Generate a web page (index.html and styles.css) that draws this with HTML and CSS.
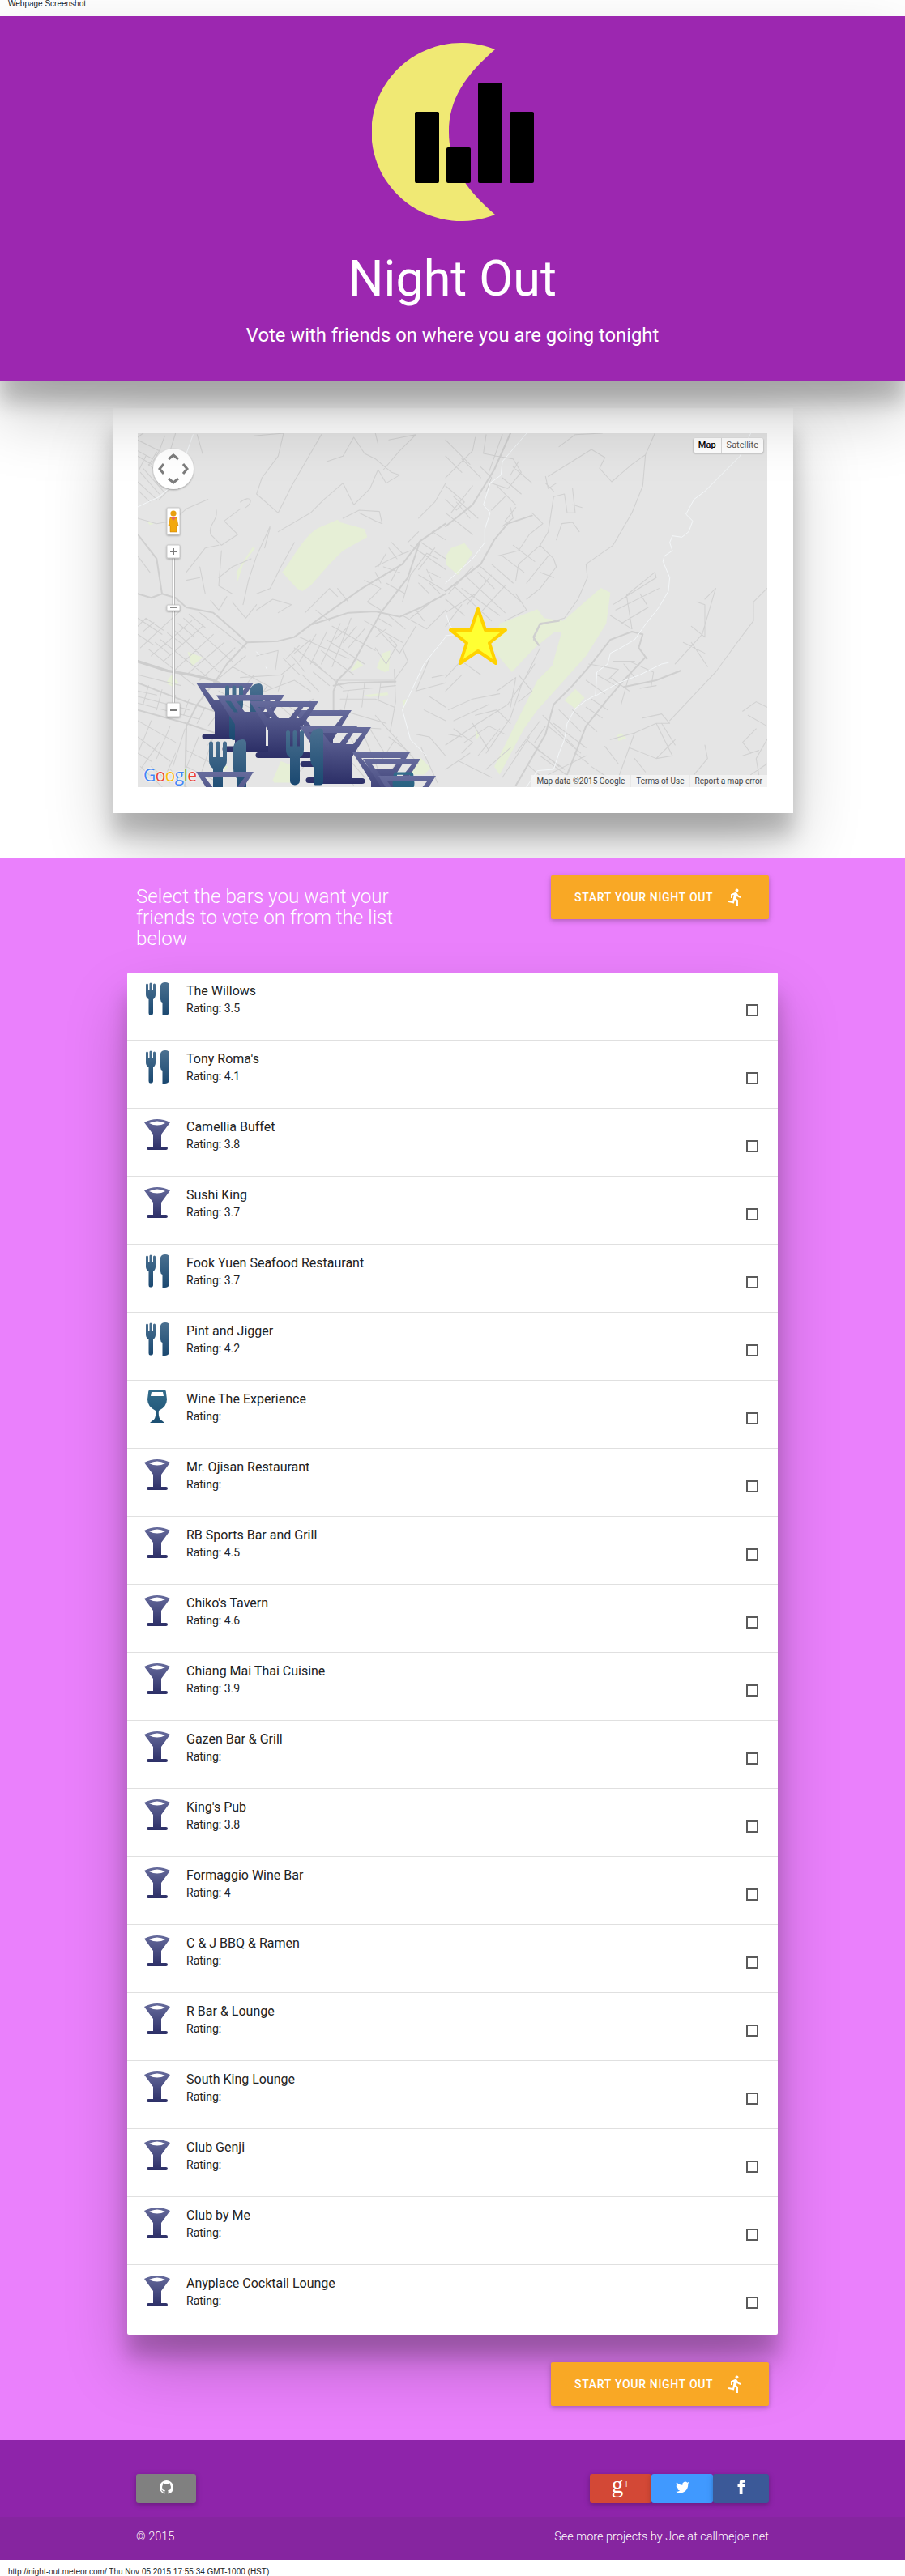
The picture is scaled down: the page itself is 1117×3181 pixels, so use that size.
FILE: index.html
```html
<!DOCTYPE html>
<html lang="en">
<head>
<meta charset="utf-8">
<title>Night Out</title>
<link rel="stylesheet" href="styles.css">
</head>
<body>
<div class="caption caption-top">Webpage Screenshot</div>
<header class="hero">
  <svg class="logo" width="202" height="220" viewBox="0 0 202 220">
    <path class="moon" d="M152 8A111 110 0 1 0 152 212C115 180 95 150 95 110C95 70 115 40 152 8Z"/>
    <rect x="53" y="85" width="30" height="88" rx="2"/>
    <rect x="92" y="129" width="30" height="44" rx="2"/>
    <rect x="131" y="49" width="30" height="124" rx="2"/>
    <rect x="170" y="85" width="30" height="88" rx="2"/>
  </svg>
  <h1 class="hero-title">Night Out</h1>
  <p class="hero-sub">Vote with friends on where you are going tonight</p>
</header>

<section class="map-band">
  <div class="map-card">
    <div class="map">
      <svg class="map-svg" width="777" height="437" viewBox="0 0 777 437">
        <defs>
          <linearGradient id="g-martini" x1="0" y1="0" x2="0" y2="1">
            <stop offset="0" stop-color="#666b9c"/>
            <stop offset="1" stop-color="#2c2f67"/>
          </linearGradient>
          <linearGradient id="g-fork" x1="0" y1="0" x2="0" y2="1">
            <stop offset="0" stop-color="#4a7090"/>
            <stop offset="1" stop-color="#1a4870"/>
          </linearGradient>
          <linearGradient id="g-wine" x1="0" y1="0" x2="0" y2="1">
            <stop offset="0" stop-color="#336d8c"/>
            <stop offset="1" stop-color="#1c4f72"/>
          </linearGradient>
          <filter id="ctl-soft" x="-30%" y="-30%" width="160%" height="160%">
            <feDropShadow dx="0" dy="1" stdDeviation="1" flood-color="#000" flood-opacity=".35"/>
          </filter>
          <symbol id="m-martini" viewBox="0 0 71 70">
            <path fill="url(#g-martini)" fill-rule="evenodd" d="M0 0H71L48 36V63H60a3.5 3.5 0 0 1 0 7H11a3.5 3.5 0 0 1 0-7H23V36ZM11 7L22 21H49L60 7Z"/>
          </symbol>
          <symbol id="m-fork" viewBox="0 0 46 70">
            <path fill="url(#g-fork)" d="M0 5a2.5 2.5 0 0 1 5 0V22H8.500V5a2.500 2.500 0 0 1 5 0V22H17V5a2.500 2.500 0 0 1 5 0V26Q22 33 17 36V65a6 5 0 0 1-12 0V36Q0 33 0 26ZM30 10Q31 1 41 0Q46 0 46 5V66a4 4 0 0 1-4 4H36a2 2 0 0 1-2-2V48Q30 44 30 36Z"/>
          </symbol>
          <symbol id="i-martini" viewBox="0 0 32 44">
            <path fill="url(#g-martini)" fill-rule="evenodd" d="M0 7Q16-1 32 7L21 22V37H27a2 2 0 0 1 0 4H5a2 2 0 0 1 0-4H11V22ZM6 8Q16 13 26 8Q16 3 6 8Z"/>
          </symbol>
          <symbol id="i-fork" viewBox="0 0 32 44">
            <path fill="url(#g-fork)" d="M2 5a1.400 1.400 0 0 1 3 0V12H6.500V4a1.400 1.400 0 0 1 3 0V12H11V5a1.400 1.400 0 0 1 3 0V17Q14 21 11 23V40Q11 43 7 42.500Q5.500 42 5.500 40V23Q2 21 2 17ZM20 6Q21 2 26 2Q31 2 31 6V39Q31 42 26 43H22.500V27Q20 26 20 23Z"/>
          </symbol>
          <symbol id="i-wine" viewBox="0 0 32 44">
            <path fill="url(#g-wine)" fill-rule="evenodd" d="M8 1H24Q27 1 27 5L28 13Q28 22 18 27Q17 34 20 38Q23 40 25 42H7Q9 40 12 38Q15 34 14 27Q4 22 4 13L5 5Q5 1 8 1ZM9 4L8 9H24L23 4Z"/>
          </symbol>
        </defs>
        <rect class="map-bg" width="777" height="437"/>
        <g transform="translate(-40 -35) scale(.3333)">
          <g class="park">
            <path d="M655 620C700 560 740 480 790 455L860 425L870 435L960 460L970 490L880 540L830 590L760 670L730 690L710 680Z"/>
            <path d="M545 528L555 530L510 590L490 655L485 620Z"/>
            <path d="M155 433L180 440L165 445Z"/>
            <path d="M305 915L360 935L320 970Z"/>
            <path d="M225 1030L245 1000L272 1030L250 1045Z"/>
            <path d="M905 990L935 945L955 965Z"/>
            <path d="M1005 975L1025 920L1055 910L1050 985L1035 990Z"/>
            <path d="M960 1075L1045 1065L1048 1075L975 1082Z"/>
            <path d="M1100 1095L1115 1090L1105 1125Z"/>
            <path d="M1165 1305L1205 1345L1180 1370L1130 1370Z"/>
            <path d="M620 1390L650 1320L690 1335L685 1400L625 1400Z"/>
            <path d="M440 1335L455 1340L440 1360Z"/>
          </g>
          <path class="road-thin" d="M120 130L200 170L170 220L120 190M120 170L175 200M200 170L220 115M140 105L120 120M260 105L240 170L300 210M340 110L360 180M300 210L260 290L200 350M130 250L200 330M140 235L215 320M160 220L240 290M120 285L190 350M125 320L165 360M150 190L125 240M190 175L160 225M215 190L185 240M380 350L300 385L250 430L190 440L120 420M410 385C420 430 380 440 390 480L430 520L490 480L440 430L500 385M500 360C540 330 550 360 520 380M610 450L560 560L530 650L510 740M610 455L590 530M700 510L650 600L610 680L560 700M300 620L370 530L420 520M420 640L470 600L540 570M350 600L370 700M430 540L420 670L470 700M660 105L640 190L580 270L560 330L640 400L690 300L800 110M880 290L810 350L760 400L640 470M820 210L880 190L920 120L960 180L1000 200L1060 250L1090 260L1040 290L1010 240L980 310L920 370L880 290M1000 105L1010 145M1050 130L1150 110L1090 170L1030 240M880 420L940 390L1015 395L1025 440L1000 430L940 400M1260 290L1220 360L1160 420M550 115L660 105M120 560L165 620M300 650L350 640M390 725L420 760L450 710M470 730L520 790L560 740M560 760L620 720L690 740L640 770M740 770L830 680L860 710M860 680L900 730M780 760L830 800M1000 600L1080 560L1130 540M960 650L1020 680L970 730L1020 760M1130 520L1260 610M1170 510L1260 570M1220 530L1160 610M1190 550L1130 630M1160 630L1260 690M1130 630L1100 730M1040 660L1110 700M1100 780L1190 830L1260 760M1150 760L1180 800M1130 790L1220 720"/>
          <path class="road-thin" d="M120 790L210 850M120 850L180 890M130 900L280 760M170 930L320 800M215 950L360 820M260 980L400 850M300 1000L440 880M350 1020L480 900M400 1030L520 930M290 790L470 950M250 830L420 990M205 870L380 1010M160 905L330 1040M350 770L520 900M120 1060L190 1075M120 1170L260 1250M120 1230L240 1320M120 1290L170 1320M170 1170L125 1280M240 1190L190 1310M295 1200L250 1340M345 1230L290 1370M400 1230L350 1380M300 1280L420 1340M300 1340L400 1390M430 1180L380 1260M470 970L620 1050M500 1010L660 1000L640 1060M560 930L640 910L630 980M660 940L720 1000M540 1080L700 1020L760 1060M700 900L850 1020M720 860L900 940M780 850L720 950M820 840L760 960M870 810L800 960M910 790L840 970M840 820L1000 910M820 870L960 960M800 910L920 1000M770 950L880 1050M960 800L1100 880M1000 820L1090 920L1150 820M1050 860L1080 890L1040 960L1000 900M1100 900L1120 950L1070 1020M850 1020L1075 1020M880 1060L1075 1040M870 1090L1000 1090L1070 1120M900 1060L880 1150M960 1030L950 1120M1020 1030L1010 1100M1070 980L1075 1100L1055 1210M870 1130L1040 1180M860 1190L1020 1200M1150 1060L1200 940M1260 1030L1150 1060M1150 1220L1200 1230L1260 1300M1050 1230L1130 1290M1170 1270L1230 1400M1060 1350L1110 1290M890 1200L940 1290M980 1200L1040 1300M1000 1150L1160 1330M650 1100L700 1130L770 1090M700 1380L780 1290M800 1360L880 1240"/>
          <path class="road-thin" d="M120 820L150 790L215 835M140 840L180 805M185 880L240 925M230 845L290 890M270 810L330 860M310 775L370 825M120 1000L280 1040M120 1080L310 1130M120 1105L350 1165M160 1040L140 1110M210 1055L190 1130M260 1075L240 1140M310 1090L290 1150M370 1120L340 1180M420 1060L550 1130L520 1220M450 1100L380 1190M500 1120L420 1230M550 1000L480 1090M600 1040L560 1100M630 1100L720 1180M240 1350L300 1415M170 1340L240 1400M130 1340L210 1415M200 1250L130 1350M260 1290L220 1380M1110 830L1050 780M1060 820L1010 790M1000 860L1040 830M960 830L900 900M930 820L880 880M900 820L850 870M720 890L670 940M760 870L700 920M690 930L740 990M650 1000L700 960M770 990L830 1040M730 1000L790 1060M1240 700L1200 660M1200 700L1160 660M1240 640L1200 620M1090 620L1030 600M1060 650L1090 590M1020 640L1050 620M1000 620L1020 660M1190 610L1210 650M1230 570L1190 550M1260 500L1210 470M1160 470L1120 510M1080 570L1050 530M1100 550L1060 510M1040 550L1010 600M960 1230L1010 1350M900 1310L960 1380M850 1300L920 1410M1080 1230L1020 1320M1200 1080L1260 1120M1180 1130L1260 1170M1210 1010L1260 1000"/>
          <path class="road-wide" d="M120 700L170 715L210 700L260 715L300 750L400 770L470 830L525 880L640 875L700 860L760 815L900 770L1000 765L1090 785L1170 750L1260 700M760 815L950 680L1100 590L1165 505L1260 440M1165 505L1120 640L1020 770L960 880L910 970L860 1020L845 1060L845 1140M120 480L190 570L210 700M525 880L450 960L410 1020L340 1110L300 1190L295 1415M120 1130L300 1180L420 1220M120 1030L300 1100L420 1140M845 1040L900 1030L1075 1025"/>
          <path class="road-high" d="M120 950L230 985L320 1000L400 1020L460 1050"/>
          <path class="river" d="M325 110L300 180L280 270L200 340L120 378M1260 860L1180 960L1100 1130L1130 1240L1190 1300M560 915L572 928M595 972L598 978"/>
        </g>
        <g transform="translate(380 -35) scale(.3333)">
          <g class="park">
            <path d="M20 530L70 512L100 550L45 630L0 590V560Z"/>
            <path d="M200 810L340 757L365 790L435 800L575 678L610 695L595 810L520 930L390 1075L340 1130L290 1200L200 1370L180 1340L270 1160L340 1020L395 965L430 840L405 840L330 900L245 990L170 900Z"/>
            <path d="M440 1095L480 1052L515 1085L480 1125Z"/>
            <path d="M110 1200L125 1225L115 1240Z"/>
            <path d="M635 1225L650 1215L670 1235L640 1245Z"/>
          </g>
          <path class="road-thin" d="M420 155L480 110L580 105M380 265L540 165L590 195L570 235L615 285L690 220L740 185L775 105M740 185L730 300L690 400L620 520L520 590L525 640L490 720L440 790L350 815L325 870L345 890M370 265L380 310L410 290M370 290L400 320M400 340L440 330L450 400L480 400L470 310M400 340L380 470L350 520L270 590L260 650M470 370L505 380M430 440L470 435L495 470M430 440L410 500M240 380L250 420L210 450M150 110L140 180L190 190L250 200L280 250L230 310L170 290M110 120L100 170L0 270M210 110L160 250M320 400L360 440L310 480L270 540L190 560M350 520L400 570L410 600L350 680L300 720M130 600L280 730M80 640L220 770M30 670L170 800M100 600L10 700M170 630L80 740M220 670L120 780M0 770L110 700M30 340L120 420M0 400L100 480M40 360L90 420M100 300L20 400M610 780L690 830M620 740L780 640L775 620L670 705L690 830M630 760L790 680M650 810L750 750M720 700L745 740M720 770L700 780M850 960L950 850L1000 680M910 820L960 860L960 740L930 730M880 880L960 920M910 880L970 970M830 1170L1000 990L1080 880L1140 800L1140 730L1190 680M730 1160L800 1145L830 1180L780 1180L700 1215L610 1240M700 1215L640 1380M590 1265L640 1330M680 1270L780 1310L840 1300L780 1180M850 1240L780 1310M740 1360L700 1310M960 1260L970 1310L920 1370M1100 1135L1150 1100L1190 1120M1120 1150L1190 1190M1150 1200L1100 1250L1130 1290M1190 1240L1150 1310L1160 1370M1130 1370L1190 1330M650 1110L680 1000M680 950L770 990L760 1050M720 1050L780 1040M400 1180L520 1270M330 1270L440 1350M360 1150L480 1270M300 1240L420 1340M0 1260L120 1180L230 1110L330 960M30 1200L100 1250L60 1290M100 1180L160 1280M150 1290L240 1160L280 1040L350 900M190 1060L260 1010L240 1120M270 1000L320 1060L270 1100M110 1150L190 1130L240 1180M50 1320L170 1380M0 1350L90 1290M10 1220L60 1230M520 1120L580 1160M540 1090L600 1130M560 1000L630 1040M530 960L640 980L600 1020M620 950L700 950"/>
          <path class="road-thin" d="M0 130L90 220M0 190L60 250M0 300L70 360L40 390L0 350M60 200L130 270M130 230L170 270L150 320M190 300L260 370M210 270L280 330M250 230L320 290M270 210L240 260M220 340L170 390M260 380L220 430M60 680L200 780M120 620L180 680M170 590L250 660M210 560L290 620M250 520L330 580M0 720L70 780M60 740L0 820M300 660L380 560M260 700L300 760L220 800M350 620L400 640M1000 680L960 720M10 1130L100 1090L200 1070M30 1170L160 1110M70 1250L160 1190L220 1220M150 1350L240 1270M210 1380L310 1230M260 1290L350 1170M330 1250L370 1190M200 1200L120 1300M380 1190L500 1290M350 1300L460 1380M380 1370L520 1300M300 1330L380 1400M420 1130L500 1210M470 1130L560 1210M480 1290L530 1330M520 1020L590 1070M610 1010L680 1060M660 960L700 1010M0 1010L120 880M0 1060L60 1000M60 950L130 1000M100 880L170 950M540 1340L600 1380M800 1180L850 1260M1100 1300L1160 1280"/>
          <path class="road-wide" d="M240 105L180 240L100 370L0 450M320 410L230 440L180 500L130 590L0 690M730 850L690 840L610 870L540 960L470 1040L400 1110L370 1220L260 1410M740 935L660 1020L600 1090L520 1190L450 1370M730 850L715 900L745 940M660 1045L780 1020L870 985M420 800L350 810L325 860L345 890"/>
          <path class="river" d="M1130 105L1090 190L1010 270L960 320L920 350L890 405L915 430L900 470L875 490L840 485L830 510L840 540L810 560L805 580L830 640L825 690L790 750L735 820L700 870L640 905L610 920L600 960L560 990L555 1075L520 1095L480 1125L450 1180L440 1240L420 1290L400 1350L340 1355L300 1415M300 105L210 210L205 260L165 290L140 370L165 400L145 460L145 510L100 570L0 660M560 1075L640 1030L720 1000L800 960L825 955M0 770L15 815L40 850L0 855"/>
        </g>
        <g class="markers">
          <use href="#m-martini" x="72" y="308" width="71" height="70"/>
          <use href="#m-fork" x="108" y="309" width="46" height="70"/>
          <use href="#m-martini" x="97" y="322" width="71" height="73"/>
          <use href="#m-martini" x="110" y="323" width="71" height="70"/>
          <use href="#m-martini" x="193" y="342" width="71" height="70"/>
          <use href="#m-martini" x="138" y="328" width="71" height="76"/>
          <use href="#m-martini" x="152" y="328" width="71" height="76"/>
          <use href="#m-martini" x="200" y="362" width="71" height="70"/>
          <use href="#m-martini" x="217" y="363" width="71" height="70"/>
          <use href="#m-fork" x="183" y="364" width="46" height="71"/>
          <use href="#m-fork" x="88" y="378" width="46" height="70"/>
          <use href="#m-martini" x="265" y="394" width="71" height="70"/>
          <use href="#m-martini" x="278" y="402" width="71" height="70"/>
          <use href="#i-wine" x="310" y="417" width="36" height="50"/>
          <use href="#m-martini" x="297" y="423" width="71" height="70"/>
          <use href="#m-martini" x="72" y="418" width="71" height="70"/>
        </g>
        <polygon class="star" points="420,-4 429,22 454,22 434,38 442,63 420,48 398,63 406,38 386,22 411,22" transform="translate(0 221)"/>
        <g class="nav">
          <circle class="ctl ctl-lift" cx="44" cy="44" r="25"/>
          <path class="chev" d="M38 32L44 27L50 32M38 56L44 61L50 56M32 38L27 44L32 50M56 38L61 44L56 50"/>
          <rect class="ctl-box" x="36" y="92" width="16" height="33" rx="1"/>
          <circle cx="44" cy="99" r="3.600" fill="#e8a010"/>
          <path d="M40 104H48L50 114H48V122H40V114H38Z" fill="#f2a80d" stroke="#c27a05" stroke-width=".5"/>
          <path d="M41 104H47L44 108Z" fill="#e8646a"/>
          <rect class="track" x="43" y="154" width="2.500" height="180"/>
          <rect class="ctl-box" x="36" y="138" width="16" height="16" rx="1"/>
          <path class="sign" d="M40 146H48M44 142V150"/>
          <rect class="ctl-box" x="36" y="212" width="16" height="7" rx="1"/>
          <path d="M40 215.500H48" stroke="#8a8a8a"/>
          <rect class="ctl-box" x="36" y="333" width="16" height="17" rx="1"/>
          <path class="sign" d="M40 342H48"/>
        </g>
      </svg>
      <div class="map-type">
        <span class="map-type-btn map-type-on">Map</span>
        <span class="map-type-btn">Satellite</span>
      </div>
      <div class="google"><span class="gb">G</span><span class="gr">o</span><span class="gy">o</span><span class="gb">g</span><span class="gg">l</span><span class="gr">e</span></div>
      <div class="attrib">
        <span class="attrib-item">Map data ©2015 Google</span>
        <span class="attrib-item">Terms of Use</span>
        <span class="attrib-item">Report a map error</span>
      </div>
    </div>
  </div>
</section>

<main class="pick">
  <div class="pick-head">
    <h2 class="pick-title">Select the bars you want your friends to vote on from the list below</h2>
    <a class="start-btn"><span class="start-label">START YOUR NIGHT OUT</span>
      <svg class="run" width="24" height="24" viewBox="0 0 24 24"><path d="M13.49 5.48c1.1 0 2-.9 2-2s-.9-2-2-2-2 .9-2 2 .9 2 2 2zm-3.6 13.9l1-4.4 2.1 2v6h2v-7.5l-2.1-2 .6-3c1.3 1.5 3.3 2.5 5.5 2.5v-2c-1.9 0-3.5-1-4.3-2.4l-1-1.6c-.4-.6-1-1-1.7-1-.3 0-.5.1-.8.1l-5.2 2.2v4.7h2v-3.4l1.8-.7-1.6 8.1-4.9-1-.4 2 7 1.4z"/></svg>
    </a>
  </div>
  <ul class="bars">
    <li class="bar"><svg class="bar-icon"><use href="#i-fork"/></svg><div class="bar-text"><div class="bar-name">The Willows</div><div class="bar-rating">Rating: 3.5</div></div><span class="check"></span></li>
    <li class="bar"><svg class="bar-icon"><use href="#i-fork"/></svg><div class="bar-text"><div class="bar-name">Tony Roma's</div><div class="bar-rating">Rating: 4.1</div></div><span class="check"></span></li>
    <li class="bar"><svg class="bar-icon"><use href="#i-martini"/></svg><div class="bar-text"><div class="bar-name">Camellia Buffet</div><div class="bar-rating">Rating: 3.8</div></div><span class="check"></span></li>
    <li class="bar"><svg class="bar-icon"><use href="#i-martini"/></svg><div class="bar-text"><div class="bar-name">Sushi King</div><div class="bar-rating">Rating: 3.7</div></div><span class="check"></span></li>
    <li class="bar"><svg class="bar-icon"><use href="#i-fork"/></svg><div class="bar-text"><div class="bar-name">Fook Yuen Seafood Restaurant</div><div class="bar-rating">Rating: 3.7</div></div><span class="check"></span></li>
    <li class="bar"><svg class="bar-icon"><use href="#i-fork"/></svg><div class="bar-text"><div class="bar-name">Pint and Jigger</div><div class="bar-rating">Rating: 4.2</div></div><span class="check"></span></li>
    <li class="bar"><svg class="bar-icon"><use href="#i-wine"/></svg><div class="bar-text"><div class="bar-name">Wine The Experience</div><div class="bar-rating">Rating:</div></div><span class="check"></span></li>
    <li class="bar"><svg class="bar-icon"><use href="#i-martini"/></svg><div class="bar-text"><div class="bar-name">Mr. Ojisan Restaurant</div><div class="bar-rating">Rating:</div></div><span class="check"></span></li>
    <li class="bar"><svg class="bar-icon"><use href="#i-martini"/></svg><div class="bar-text"><div class="bar-name">RB Sports Bar and Grill</div><div class="bar-rating">Rating: 4.5</div></div><span class="check"></span></li>
    <li class="bar"><svg class="bar-icon"><use href="#i-martini"/></svg><div class="bar-text"><div class="bar-name">Chiko's Tavern</div><div class="bar-rating">Rating: 4.6</div></div><span class="check"></span></li>
    <li class="bar"><svg class="bar-icon"><use href="#i-martini"/></svg><div class="bar-text"><div class="bar-name">Chiang Mai Thai Cuisine</div><div class="bar-rating">Rating: 3.9</div></div><span class="check"></span></li>
    <li class="bar"><svg class="bar-icon"><use href="#i-martini"/></svg><div class="bar-text"><div class="bar-name">Gazen Bar &amp; Grill</div><div class="bar-rating">Rating:</div></div><span class="check"></span></li>
    <li class="bar"><svg class="bar-icon"><use href="#i-martini"/></svg><div class="bar-text"><div class="bar-name">King's Pub</div><div class="bar-rating">Rating: 3.8</div></div><span class="check"></span></li>
    <li class="bar"><svg class="bar-icon"><use href="#i-martini"/></svg><div class="bar-text"><div class="bar-name">Formaggio Wine Bar</div><div class="bar-rating">Rating: 4</div></div><span class="check"></span></li>
    <li class="bar"><svg class="bar-icon"><use href="#i-martini"/></svg><div class="bar-text"><div class="bar-name">C &amp; J BBQ &amp; Ramen</div><div class="bar-rating">Rating:</div></div><span class="check"></span></li>
    <li class="bar"><svg class="bar-icon"><use href="#i-martini"/></svg><div class="bar-text"><div class="bar-name">R Bar &amp; Lounge</div><div class="bar-rating">Rating:</div></div><span class="check"></span></li>
    <li class="bar"><svg class="bar-icon"><use href="#i-martini"/></svg><div class="bar-text"><div class="bar-name">South King Lounge</div><div class="bar-rating">Rating:</div></div><span class="check"></span></li>
    <li class="bar"><svg class="bar-icon"><use href="#i-martini"/></svg><div class="bar-text"><div class="bar-name">Club Genji</div><div class="bar-rating">Rating:</div></div><span class="check"></span></li>
    <li class="bar"><svg class="bar-icon"><use href="#i-martini"/></svg><div class="bar-text"><div class="bar-name">Club by Me</div><div class="bar-rating">Rating:</div></div><span class="check"></span></li>
    <li class="bar"><svg class="bar-icon"><use href="#i-martini"/></svg><div class="bar-text"><div class="bar-name">Anyplace Cocktail Lounge</div><div class="bar-rating">Rating:</div></div><span class="check"></span></li>
  </ul>
  <div class="pick-foot">
    <a class="start-btn"><span class="start-label">START YOUR NIGHT OUT</span>
      <svg class="run" width="24" height="24" viewBox="0 0 24 24"><path d="M13.49 5.48c1.1 0 2-.9 2-2s-.9-2-2-2-2 .9-2 2 .9 2 2 2zm-3.6 13.9l1-4.4 2.1 2v6h2v-7.5l-2.1-2 .6-3c1.3 1.5 3.3 2.5 5.5 2.5v-2c-1.9 0-3.5-1-4.3-2.4l-1-1.6c-.4-.6-1-1-1.7-1-.3 0-.5.1-.8.1l-5.2 2.2v4.7h2v-3.4l1.8-.7-1.6 8.1-4.9-1-.4 2 7 1.4z"/></svg>
    </a>
  </div>
</main>

<footer class="foot">
  <div class="foot-main">
    <a class="sq sq-git"><svg width="17" height="17" viewBox="0 0 16 16"><path d="M8 0C3.58 0 0 3.58 0 8c0 3.54 2.29 6.53 5.47 7.59.4.07.55-.17.55-.38 0-.19-.01-.82-.01-1.49-2.01.37-2.53-.49-2.69-.94-.09-.23-.48-.94-.82-1.13-.28-.15-.68-.52-.01-.53.63-.01 1.08.58 1.23.82.72 1.21 1.87.87 2.33.66.07-.52.28-.87.51-1.07-1.78-.2-3.64-.89-3.64-3.95 0-.87.31-1.59.82-2.15-.08-.2-.36-1.02.08-2.12 0 0 .67-.21 2.2.82.64-.18 1.32-.27 2-.27.68 0 1.36.09 2 .27 1.53-1.04 2.2-.82 2.2-.82.44 1.1.16 1.92.08 2.12.51.56.82 1.27.82 2.15 0 3.07-1.87 3.75-3.65 3.95.29.25.54.73.54 1.48 0 1.07-.01 1.93-.01 2.2 0 .21.15.46.55.38A8.013 8.013 0 0016 8c0-4.42-3.58-8-8-8z"/></svg></a>
    <div class="socials">
      <a class="sq sq-gplus"><span class="gplus-g">g</span><span class="gplus-p">+</span></a>
      <a class="sq sq-tw"><svg width="17" height="17" viewBox="0 0 24 24"><path d="M23.953 4.57a10 10 0 01-2.825.775 4.958 4.958 0 002.163-2.723c-.951.555-2.005.959-3.127 1.184a4.92 4.92 0 00-8.384 4.482C7.69 8.095 4.067 6.13 1.64 3.162a4.822 4.822 0 00-.666 2.475c0 1.71.87 3.213 2.188 4.096a4.904 4.904 0 01-2.228-.616v.06a4.923 4.923 0 003.946 4.827 4.996 4.996 0 01-2.212.085 4.936 4.936 0 004.604 3.417 9.867 9.867 0 01-6.102 2.105c-.39 0-.779-.023-1.17-.067a13.995 13.995 0 007.557 2.209c9.053 0 13.998-7.496 13.998-13.985 0-.21 0-.42-.015-.63A9.935 9.935 0 0024 4.59z"/></svg></a>
      <a class="sq sq-fb"><svg width="18" height="18" viewBox="0 0 24 24"><path d="M9 8H6v4h3v12h5V12h3.6l.4-4h-4V6.3c0-1 .2-1.3 1.1-1.3H18V0h-3.8C10.6 0 9 1.6 9 4.6z"/></svg></a>
    </div>
  </div>
  <div class="foot-copy">
    <span class="copy-left">© 2015</span>
    <span class="copy-right">See more projects by Joe at callmejoe.net</span>
  </div>
</footer>
<div class="caption caption-bottom">http://night-out.meteor.com/ Thu Nov 05 2015 17:55:34 GMT-1000 (HST)</div>
</body>
</html>
```
FILE: styles.css
```css
* { box-sizing: border-box; }
html, body { margin: 0; padding: 0; }
body { font-family: Roboto, "Liberation Sans", sans-serif; background: #fff; color: #000; width: 1117px; }
a { color: inherit; text-decoration: none; }

.caption { font-family: "Liberation Sans", Arial, sans-serif; height: 20px; padding-left: 10px; color: #222; }
.caption-top { font-size: 10px; line-height: 9px; }
.caption-bottom { font-size: 10px; line-height: 29px; overflow: hidden; }

.hero { position: relative; z-index: 2; height: 450px; background: #9c27b0; color: #fff; text-align: center; padding-top: 33px;
  box-shadow: 0 27px 24px 0 rgba(0,0,0,.2), 0 40px 77px 0 rgba(0,0,0,.22); }
.logo { display: block; margin-left: 459px; }
.moon { fill: #f0e974; }
.hero-title { margin: 36px 0 0; font-size: 61px; line-height: 70px; font-weight: 400; }
.hero-sub { margin: 20px 0 0; font-size: 23.8px; line-height: 30px; font-weight: 400; }

.map-band { height: 589px; padding: 34px 0 0 139px; background: #fff; }
.map-card { width: 840px; height: 500px; padding: 31px 32px 32px 31px; background: #fff;
  box-shadow: 0 27px 24px 0 rgba(0,0,0,.2), 0 40px 77px 0 rgba(0,0,0,.22); }
.map { position: relative; width: 777px; height: 437px; overflow: hidden; }
.map-svg { display: block; }
.map-bg { fill: #e5e5e5; }
.park { fill: #e6efd6; }
.road-thin, .road-wide, .road-high, .river { fill: none; stroke-linejoin: round; stroke-linecap: round; }
.road-thin { stroke: #d1d1d1; stroke-width: 3.2; }
.road-wide { stroke: #cfcfcf; stroke-width: 6; }
.road-high { stroke: #cdcdcd; stroke-width: 10; }
.river { stroke: #f3f6f8; stroke-width: 3; }
.star { fill: #ffff33; stroke: #ffd200; stroke-width: 4; stroke-linejoin: round; }
.ctl { fill: #fff; }
.ctl-lift { filter: url(#ctl-soft); }
.chev { fill: none; stroke: #7d7d7d; stroke-width: 3; }
.ctl-box { fill: #fff; stroke: #bdbdbd; stroke-width: .8; filter: url(#ctl-soft); }
.track { fill: #fff; stroke: #9e9e9e; stroke-width: .7; }
.sign { fill: none; stroke: #7a7a7a; stroke-width: 2; }

.map-type { position: absolute; top: 6px; right: 5px; display: flex; background: #fff; border-radius: 2px; box-shadow: 0 1px 2px rgba(0,0,0,.4); font-family: Roboto, sans-serif; font-size: 11px; height: 18px; line-height: 18px; color: #565656; }
.map-type-btn { padding: 0 6px; }
.map-type-btn + .map-type-btn { border-left: 1px solid #d8d8d8; }
.map-type-on { color: #000; font-weight: 500; }
.google { position: absolute; left: 7px; bottom: 2px; font-family: "Open Sans", sans-serif; font-size: 21px; line-height: 26px; letter-spacing: -.6px; text-shadow: 0 0 2px #fff, 0 0 2px #fff; }
.gb { color: #4285f4; } .gr { color: #ea4335; } .gy { color: #fbbc05; } .gg { color: #34a853; }
.attrib { position: absolute; right: 0; bottom: 0; display: flex; height: 15px; line-height: 15px; font-size: 10px; color: #444; background: rgba(245,245,245,.75); }
.attrib-item { padding: 0 6px; }
.attrib-item:first-child { padding-right: 7px; }
.attrib-item + .attrib-item { border-left: 1px solid #e8e8e8; }

.pick { height: 1954px; background: #ea80fc; padding-top: 22px; }
.pick-head { display: flex; justify-content: space-between; align-items: flex-start; padding: 0 168px; height: 120px; }
.pick-title { margin: 13px 0 0; width: 340px; font-size: 24.2px; line-height: 26px; font-weight: 300; color: #fff; }
.start-btn { display: flex; align-items: center; justify-content: space-between; flex: none; width: 269px; height: 54px; padding: 0 29px; background: #f9a825; border-radius: 2px; color: #fff; font-size: 14px; font-weight: 500; letter-spacing: .7px; box-shadow: 0 2px 5px rgba(0,0,0,.16), 0 2px 10px rgba(0,0,0,.12); }
.start-label { white-space: nowrap; }
.run { fill: #fff; flex: none; }

.bars { list-style: none; margin: 0 0 0 157px; padding: 0 0 2px; width: 803px; background: #fff; border-radius: 2px; box-shadow: 0 27px 24px 0 rgba(0,0,0,.2), 0 40px 77px 0 rgba(0,0,0,.22); }
.bar { display: grid; grid-template-columns: 32px 1fr 15px; column-gap: 20px; height: 84px; padding: 10px 24px 0 21px; border-bottom: 1px solid #e0e0e0; }
.bar:last-child { border-bottom: 0; }
.bar-icon { width: 32px; height: 44px; display: block; }
.bar-text { padding-top: 2px; }
.bar-name { font-size: 16px; line-height: 22px; font-weight: 400; color: #222; }
.bar-rating { font-size: 14px; line-height: 21px; font-weight: 400; color: #222; }
.check { display: block; width: 15px; height: 15px; margin-top: 29px; border: 2px solid #5a5a5a; }

.pick-foot { display: flex; justify-content: flex-end; padding: 34px 168px 0; }

.foot { height: 148px; background: #8e24aa; color: #fff; }
.foot-main { height: 95px; padding: 42px 168px 0; display: flex; justify-content: space-between; align-items: flex-start; }
.sq { display: flex; align-items: center; justify-content: center; height: 36px; border-radius: 3px; box-shadow: 0 2px 5px rgba(0,0,0,.16), 0 2px 10px rgba(0,0,0,.12); }
.sq svg { fill: #fff; margin-top: -4px; }
.sq-git { width: 74px; background: #808080; }
.socials { display: flex; }
.sq-gplus { width: 76px; background: #d34836; }
.sq-tw { width: 76px; background: #4099ff; }
.sq-fb { width: 69px; background: #3b5998; }
.gplus-g { font-family: "Liberation Serif", serif; font-size: 29px; line-height: 26px; margin-top: -10px; }
.gplus-p { font-family: "Liberation Serif", serif; font-size: 14px; margin-top: -10px; }
.foot-copy { height: 53px; padding: 0 168px 5px; display: flex; justify-content: space-between; align-items: center; background: rgba(51,51,51,.08); font-size: 14.5px; font-weight: 300; color: #fff; }
```
